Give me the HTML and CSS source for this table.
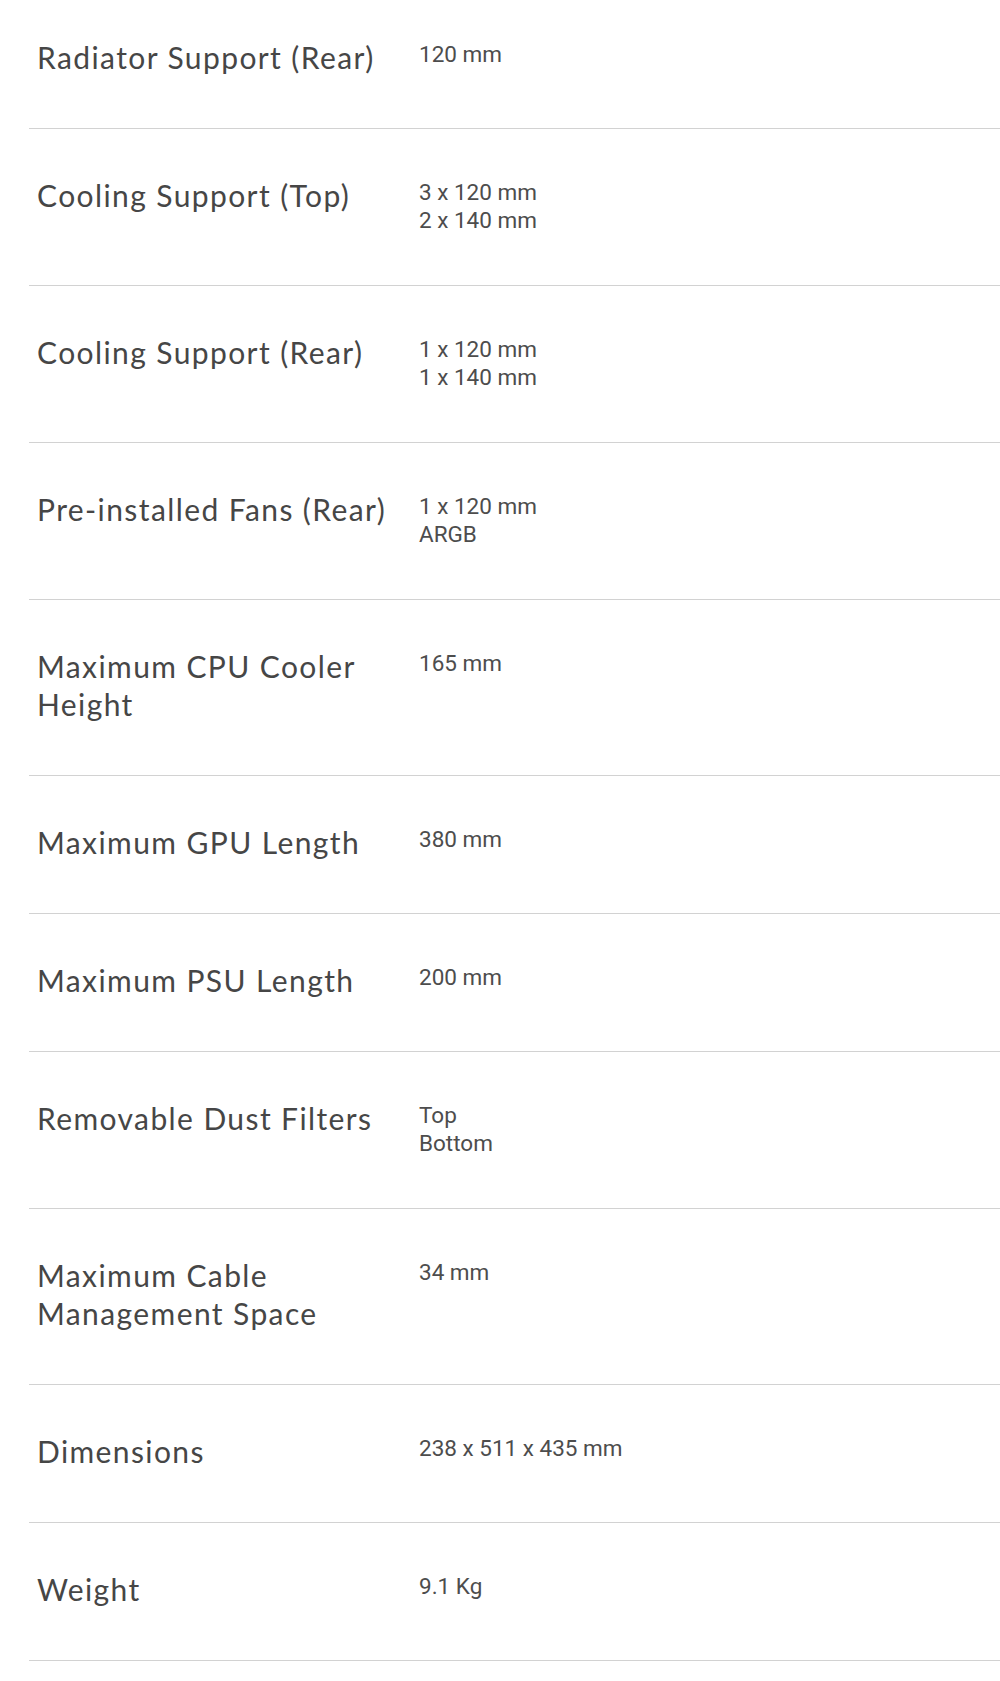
FILE: index.html
```html
<!DOCTYPE html>
<html lang="en">
<head>
<meta charset="utf-8">
<title>Specifications</title>
<link rel="stylesheet" href="styles.css">
</head>
<body>
<div class="specs">
  <div class="row first">
    <div class="label">Radiator Support (Rear)</div>
    <div class="value">120 mm</div>
  </div>
  <div class="row">
    <div class="label">Cooling Support (Top)</div>
    <div class="value">3 x 120 mm<br>2 x 140 mm</div>
  </div>
  <div class="row">
    <div class="label">Cooling Support (Rear)</div>
    <div class="value">1 x 120 mm<br>1 x 140 mm</div>
  </div>
  <div class="row">
    <div class="label">Pre-installed Fans (Rear)</div>
    <div class="value">1 x 120 mm<br>ARGB</div>
  </div>
  <div class="row">
    <div class="label">Maximum CPU Cooler Height</div>
    <div class="value">165 mm</div>
  </div>
  <div class="row">
    <div class="label">Maximum GPU Length</div>
    <div class="value">380 mm</div>
  </div>
  <div class="row">
    <div class="label">Maximum PSU Length</div>
    <div class="value">200 mm</div>
  </div>
  <div class="row">
    <div class="label">Removable Dust Filters</div>
    <div class="value">Top<br>Bottom</div>
  </div>
  <div class="row">
    <div class="label">Maximum Cable Management Space</div>
    <div class="value">34 mm</div>
  </div>
  <div class="row">
    <div class="label">Dimensions</div>
    <div class="value">238 x 511 x 435 mm</div>
  </div>
  <div class="row">
    <div class="label">Weight</div>
    <div class="value">9.1 Kg</div>
  </div>
</div>
</body>
</html>
```

FILE: styles.css
```css
html, body {
  margin: 0;
  padding: 0;
  background: #ffffff;
}

.specs {
  margin-left: 29px;
}

.row {
  display: grid;
  grid-template-columns: 390px 1fr;
  padding: 49px 0 51px;
  border-bottom: 1px solid #d2d2d2;
}

.row.first {
  padding-top: 40px;
}

.label {
  margin-top: -2px;
  padding: 0 10px 1px 8px;
  font-family: Lato, "Noto Sans", sans-serif;
  font-size: 30px;
  line-height: 38px;
  letter-spacing: 1.4px;
  color: #464646;
}

.value {
  font-family: Roboto, "Liberation Sans", sans-serif;
  font-size: 22.5px;
  line-height: 28px;
  color: #4d4d4d;
}
```
